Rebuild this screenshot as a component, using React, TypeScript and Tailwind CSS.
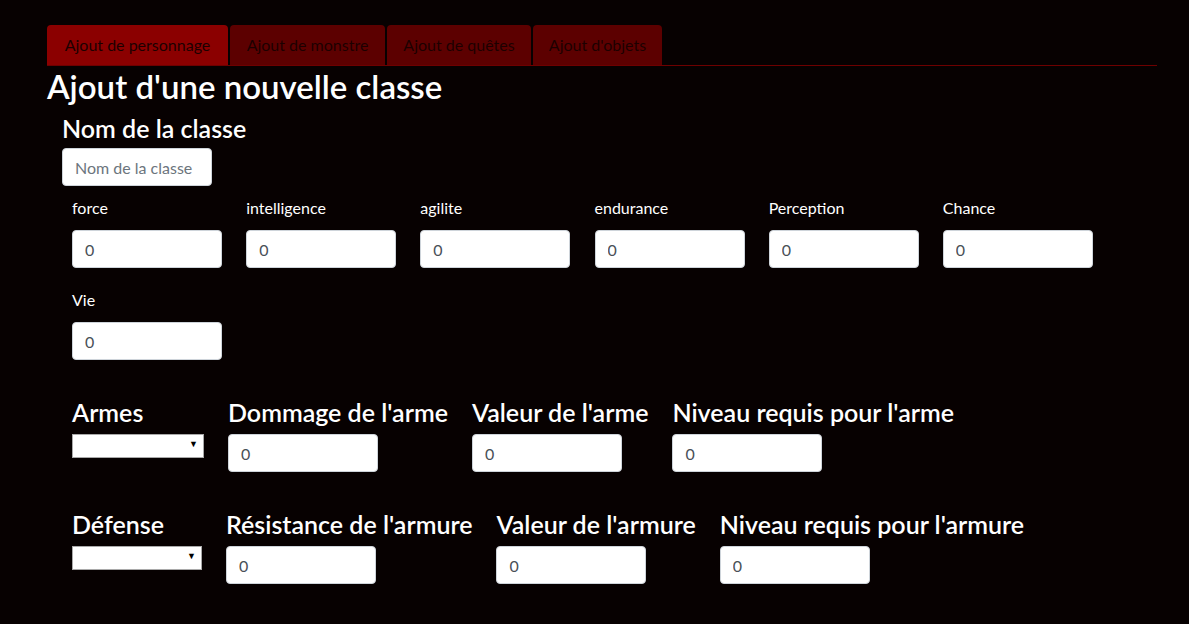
import { useState } from 'react';

const tabs = [
  { label: 'Ajout de personnage', width: 'w-[181px]' },
  { label: 'Ajout de monstre', width: 'w-[155px]' },
  { label: 'Ajout de quêtes', width: 'w-[144px]' },
  { label: "Ajout d'objets", width: 'w-[129px]' },
];

const stats = ['force', 'intelligence', 'agilite', 'endurance', 'Perception', 'Chance', 'Vie'];

function NumberInput({ value = '0' }: { value?: string }): React.ReactElement {
  return (
    <input
      type="text"
      defaultValue={value}
      className="block w-[150px] h-[38px] rounded-[4px] border border-[#ced4da] bg-white px-3 text-[16px] text-[#495057] outline-none"
    />
  );
}

function FakeSelect({ width }: { width: string }): React.ReactElement {
  return (
    <div className={`relative h-[24px] ${width}`}>
      <select className="block h-full w-full appearance-none border border-[#a9a9a9] bg-white text-[14px] outline-none">
        <option value=""></option>
      </select>
      <span className="pointer-events-none absolute right-[6px] top-[5px] text-[9px] leading-none text-black">▼</span>
    </div>
  );
}

function Field({ label, children }: { label: string; children: React.ReactNode }): React.ReactElement {
  return (
    <div className="flex flex-col">
      <h4 className="mb-[7px] text-[25px] font-semibold leading-[30px] text-white whitespace-nowrap">{label}</h4>
      {children}
    </div>
  );
}

export default function App(): React.ReactElement {
  const [activeTab, setActiveTab] = useState(0);

  return (
    <div className="min-h-screen bg-[#070101] font-['Lato','Liberation_Sans',sans-serif] text-white">
      <div className="px-[47px] pt-[25px]">
        <nav className="flex w-[1110px] gap-[2px] border-b border-[#6e0000]">
          {tabs.map((t, i) => (
            <button
              key={t.label}
              onClick={() => setActiveTab(i)}
              className={`h-[40px] ${t.width} rounded-t-[4px] text-[16px] text-[#1c0000] ${
                activeTab === i ? 'bg-[#8b0000]' : 'bg-[#5c0000]'
              }`}
            >
              {t.label}
            </button>
          ))}
        </nav>

        <h2 className="mt-[1px] text-[33px] font-semibold leading-[38px]">Ajout d'une nouvelle classe</h2>

        <div className="pl-[15px] pt-[8px]">
          <h4 className="mb-[5px] text-[25px] font-semibold leading-[30px]">Nom de la classe</h4>
          <input
            type="text"
            placeholder="Nom de la classe"
            className="block w-[150px] h-[38px] rounded-[4px] border border-[#ced4da] bg-white px-3 text-[16px] text-[#495057] placeholder:text-[#6c757d] outline-none"
          />

          <div className="grid w-[1055px] grid-cols-6 pl-[10px] pt-[10px]">
            {stats.map((s) => (
              <div key={s} className="mb-[20px]">
                <label className="mb-[10px] block text-[16px] leading-[24px]">{s}</label>
                <NumberInput />
              </div>
            ))}
          </div>

          <div className="flex gap-[24px] pl-[10px] pt-[17px]">
            <Field label="Armes">
              <FakeSelect width="w-[132px]" />
            </Field>
            <Field label="Dommage de l'arme"><NumberInput /></Field>
            <Field label="Valeur de l'arme"><NumberInput /></Field>
            <Field label="Niveau requis pour l'arme"><NumberInput /></Field>
          </div>

          <div className="flex gap-[24px] pl-[10px] pt-[37px]">
            <Field label="Défense">
              <FakeSelect width="w-[130px]" />
            </Field>
            <Field label="Résistance de l'armure"><NumberInput /></Field>
            <Field label="Valeur de l'armure"><NumberInput /></Field>
            <Field label="Niveau requis pour l'armure"><NumberInput /></Field>
          </div>
        </div>
      </div>
    </div>
  );
}
